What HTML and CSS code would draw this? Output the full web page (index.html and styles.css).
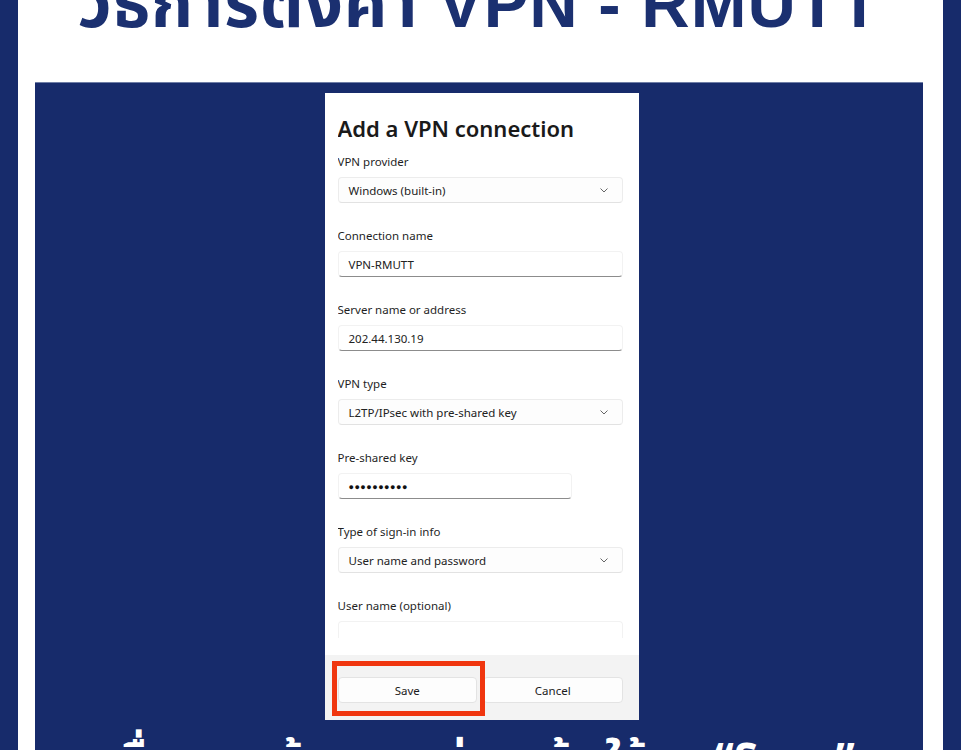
FILE: index.html
```html
<!DOCTYPE html>
<html lang="th">
<head>
    <meta charset="UTF-8">
    <meta name="viewport" content="width=device-width, initial-scale=1.0">
    <title>วิธีการตั้งค่า VPN - RMUTT</title>
    <link rel="stylesheet" href="styles.css">
</head>
<body>
    <div class="frame">
        <header class="head">
            <h1 class="title">วิธีการตั้งค่า VPN - RMUTT</h1>
        </header>

        <main class="panel">
            <div class="dialog">
                <div class="dialog-body">
                    <div class="scroll">
                        <h2>Add a VPN connection</h2>

                        <div class="field">
                            <label>VPN provider</label>
                            <div class="select">
                                <span>Windows (built-in)</span>
                                <svg class="chev" width="8" height="5" viewBox="0 0 8 5"><polyline points="0.5,0.5 4,4 7.5,0.5" /></svg>
                            </div>
                        </div>

                        <div class="field">
                            <label>Connection name</label>
                            <div class="input">VPN-RMUTT</div>
                        </div>

                        <div class="field">
                            <label>Server name or address</label>
                            <div class="input">202.44.130.19</div>
                        </div>

                        <div class="field">
                            <label>VPN type</label>
                            <div class="select">
                                <span>L2TP/IPsec with pre-shared key</span>
                                <svg class="chev" width="8" height="5" viewBox="0 0 8 5"><polyline points="0.5,0.5 4,4 7.5,0.5" /></svg>
                            </div>
                        </div>

                        <div class="field">
                            <label>Pre-shared key</label>
                            <div class="input input-short dots">●●●●●●●●●●</div>
                        </div>

                        <div class="field">
                            <label>Type of sign-in info</label>
                            <div class="select">
                                <span>User name and password</span>
                                <svg class="chev" width="8" height="5" viewBox="0 0 8 5"><polyline points="0.5,0.5 4,4 7.5,0.5" /></svg>
                            </div>
                        </div>

                        <div class="field">
                            <label>User name (optional)</label>
                            <div class="input"></div>
                        </div>
                    </div>
                </div>

                <div class="dialog-foot">
                    <button class="btn">Save</button>
                    <button class="btn">Cancel</button>
                    <span class="highlight"></span>
                </div>
            </div>

            <p class="caption">เมื่อกรอกข้อมูลทุกช่องแล้ว ให้กด “Save”</p>
        </main>
    </div>
</body>
</html>
```

FILE: styles.css
```css
html, body {
    margin: 0;
    height: 750px;
    overflow: hidden;
}
body {
    background-color: #172b6b;
    font-family: "Noto Sans", "Open Sans", Arial, sans-serif;
}
.frame {
    margin: 0 18px;
    padding: 0 20px 0 17px;
    height: 750px;
    background-color: #fff;
}
.head {
    height: 82px;
    overflow: hidden;
}
.title {
    margin: -30px 0 0;
    font-family: "Liberation Sans", "Noto Sans Thai", "Noto Sans", sans-serif;
    font-size: 67px;
    line-height: 67px;
    font-weight: bold;
    letter-spacing: 1px;
    color: #1b3070;
    text-align: center;
    white-space: nowrap;
}
.panel {
    background-color: #172b6b;
    border-top: 1px solid #6f7ea6;
    height: 700px;
    display: flex;
    flex-direction: column;
    align-items: center;
    padding-top: 10px;
    box-sizing: border-box;
}
.dialog {
    width: 314px;
    margin-left: 5px;
    background-color: #fff;
    color: #1b1b1b;
}
.dialog-body {
    height: 562px;
    padding: 19px 16px 0 13px;
    box-sizing: border-box;
}
.scroll {
    height: 526px;
    overflow: hidden;
}
.dialog-body h2 {
    margin: 0 0 10px;
    font-size: 22px;
    line-height: 32px;
    font-weight: 600;
    color: #1a1a1a;
}
.field {
    margin-bottom: 25px;
}
.field label {
    display: block;
    font-size: 11.5px;
    line-height: 16px;
    margin-bottom: 7px;
    color: #1f1f1f;
}
.select, .input {
    height: 26px;
    box-sizing: border-box;
    border: 1px solid #ececec;
    border-radius: 4px;
    background-color: #fdfdfd;
    padding: 0 10px;
    font-size: 11.5px;
    display: flex;
    align-items: center;
    justify-content: space-between;
    color: #222;
}
.select {
    border-bottom-color: #e2e2e2;
}
.input {
    border-color: #f2f2f2;
    border-bottom: 1px solid #8c8c8c;
    background-color: #fff;
}
.input-short {
    width: 234px;
}
.dots {
    font-size: 9px;
    letter-spacing: 0.5px;
    color: #111;
}
.chev {
    fill: none;
    stroke: #666;
    stroke-width: 1;
    margin-right: 4px;
}
.dialog-foot {
    position: relative;
    height: 65px;
    background-color: #f3f3f3;
    padding: 22px 16px 0 13px;
    box-sizing: border-box;
    display: flex;
    gap: 6px;
}
.btn {
    flex: 1;
    height: 26px;
    border: 1px solid #e3e3e3;
    border-radius: 4px;
    background-color: #fdfdfd;
    font-family: inherit;
    font-size: 11.5px;
    color: #1b1b1b;
    padding: 0;
}
.highlight {
    position: absolute;
    left: 7px;
    top: 6px;
    width: 153px;
    height: 55px;
    border: 5px solid #f0360f;
    box-sizing: border-box;
}
.caption {
    margin: 12px 0 0;
    font-family: "Noto Sans Thai", "Liberation Sans", sans-serif;
    font-size: 44px;
    line-height: 60px;
    font-weight: bold;
    color: #fff;
    white-space: nowrap;
}
```
